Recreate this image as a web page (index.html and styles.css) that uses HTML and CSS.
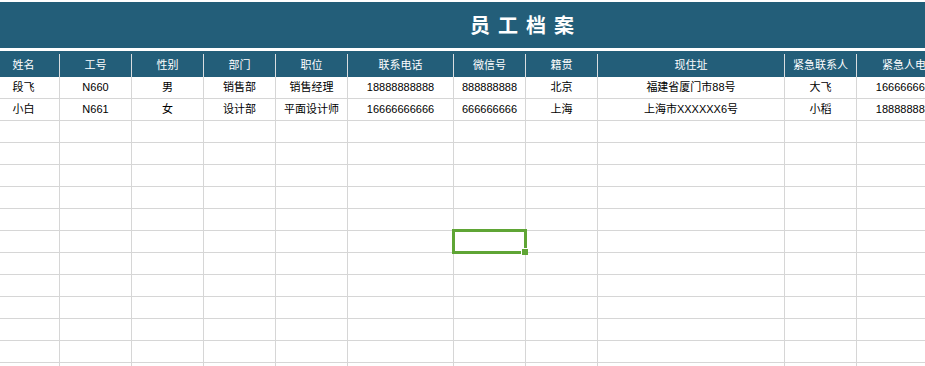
FILE: index.html
```html
<!DOCTYPE html>
<html lang="zh">
<head>
<meta charset="utf-8">
<title>员工档案</title>
<link rel="stylesheet" href="styles.css">
</head>
<body>
<div class="sheet">
  <div class="title-band"><span class="title">员工档案</span></div>
  <div class="grid">
    <div class="row head">
      <div class="cell">姓名</div><div class="cell">工号</div><div class="cell">性别</div><div class="cell">部门</div><div class="cell">职位</div><div class="cell">联系电话</div><div class="cell">微信号</div><div class="cell">籍贯</div><div class="cell">现住址</div><div class="cell">紧急联系人</div><div class="cell">紧急人电话</div>
    </div>
    <div class="row">
      <div class="cell">段飞</div><div class="cell">N660</div><div class="cell">男</div><div class="cell">销售部</div><div class="cell">销售经理</div><div class="cell">18888888888</div><div class="cell">888888888</div><div class="cell">北京</div><div class="cell">福建省厦门市88号</div><div class="cell">大飞</div><div class="cell">16666666666</div>
    </div>
    <div class="row">
      <div class="cell">小白</div><div class="cell">N661</div><div class="cell">女</div><div class="cell">设计部</div><div class="cell">平面设计师</div><div class="cell">16666666666</div><div class="cell">666666666</div><div class="cell">上海</div><div class="cell">上海市XXXXXX6号</div><div class="cell">小稻</div><div class="cell">18888888888</div>
    </div>
    <div class="row"><div class="cell"></div><div class="cell"></div><div class="cell"></div><div class="cell"></div><div class="cell"></div><div class="cell"></div><div class="cell"></div><div class="cell"></div><div class="cell"></div><div class="cell"></div><div class="cell"></div></div>
    <div class="row"><div class="cell"></div><div class="cell"></div><div class="cell"></div><div class="cell"></div><div class="cell"></div><div class="cell"></div><div class="cell"></div><div class="cell"></div><div class="cell"></div><div class="cell"></div><div class="cell"></div></div>
    <div class="row"><div class="cell"></div><div class="cell"></div><div class="cell"></div><div class="cell"></div><div class="cell"></div><div class="cell"></div><div class="cell"></div><div class="cell"></div><div class="cell"></div><div class="cell"></div><div class="cell"></div></div>
    <div class="row"><div class="cell"></div><div class="cell"></div><div class="cell"></div><div class="cell"></div><div class="cell"></div><div class="cell"></div><div class="cell"></div><div class="cell"></div><div class="cell"></div><div class="cell"></div><div class="cell"></div></div>
    <div class="row"><div class="cell"></div><div class="cell"></div><div class="cell"></div><div class="cell"></div><div class="cell"></div><div class="cell"></div><div class="cell"></div><div class="cell"></div><div class="cell"></div><div class="cell"></div><div class="cell"></div></div>
    <div class="row"><div class="cell"></div><div class="cell"></div><div class="cell"></div><div class="cell"></div><div class="cell"></div><div class="cell"></div><div class="cell selected"><span class="sel-box"></span><span class="sel-handle"></span></div><div class="cell"></div><div class="cell"></div><div class="cell"></div><div class="cell"></div></div>
    <div class="row"><div class="cell"></div><div class="cell"></div><div class="cell"></div><div class="cell"></div><div class="cell"></div><div class="cell"></div><div class="cell"></div><div class="cell"></div><div class="cell"></div><div class="cell"></div><div class="cell"></div></div>
    <div class="row"><div class="cell"></div><div class="cell"></div><div class="cell"></div><div class="cell"></div><div class="cell"></div><div class="cell"></div><div class="cell"></div><div class="cell"></div><div class="cell"></div><div class="cell"></div><div class="cell"></div></div>
    <div class="row"><div class="cell"></div><div class="cell"></div><div class="cell"></div><div class="cell"></div><div class="cell"></div><div class="cell"></div><div class="cell"></div><div class="cell"></div><div class="cell"></div><div class="cell"></div><div class="cell"></div></div>
    <div class="row"><div class="cell"></div><div class="cell"></div><div class="cell"></div><div class="cell"></div><div class="cell"></div><div class="cell"></div><div class="cell"></div><div class="cell"></div><div class="cell"></div><div class="cell"></div><div class="cell"></div></div>
    <div class="row"><div class="cell"></div><div class="cell"></div><div class="cell"></div><div class="cell"></div><div class="cell"></div><div class="cell"></div><div class="cell"></div><div class="cell"></div><div class="cell"></div><div class="cell"></div><div class="cell"></div></div>
    <div class="row"><div class="cell"></div><div class="cell"></div><div class="cell"></div><div class="cell"></div><div class="cell"></div><div class="cell"></div><div class="cell"></div><div class="cell"></div><div class="cell"></div><div class="cell"></div><div class="cell"></div></div>
  </div>
</div>
</body>
</html>
```

FILE: styles.css
```css
html, body {
  margin: 0;
  padding: 0;
  background: #ffffff;
}

.sheet {
  width: 925px;
  height: 366px;
  overflow: hidden;
  padding-top: 2px;
  box-sizing: border-box;
  font-family: "Liberation Sans", "Noto Sans CJK SC", sans-serif;
  font-size: 11px;
  color: #000;
}

.title-band {
  height: 46px;
  background: #235e79;
  display: flex;
  align-items: center;
  padding-left: 470px;
  box-sizing: border-box;
}

.title {
  color: #ffffff;
  font-family: "Noto Sans CJK SC", sans-serif;
  font-size: 20px;
  font-weight: 700;
  letter-spacing: 8px;
  line-height: 1;
}

.grid {
  margin-top: 3px;
  margin-left: -12px;
  width: 975px;
}

.row {
  display: grid;
  grid-template-columns: 72px 72px 72px 72px 72px 106px 72px 72px 187px 72px 106px;
  height: 22px;
}

.cell {
  box-sizing: border-box;
  border-right: 1px solid #d6d6d6;
  border-bottom: 1px solid #d6d6d6;
  display: flex;
  align-items: center;
  justify-content: center;
  white-space: nowrap;
  overflow: hidden;
  line-height: 1;
}

.row.head {
  height: 26px;
  background: #235e79;
  padding-top: 3px;
  box-sizing: border-box;
}

.row.head .cell {
  color: #ffffff;
  border-bottom: none;
  border-right-color: #d9dde0;
  padding-bottom: 1px;
}

.cell.selected {
  position: relative;
  overflow: visible;
}

.sel-box {
  position: absolute;
  left: -2px;
  top: -2px;
  width: 75px;
  height: 25px;
  box-sizing: border-box;
  border: 3px solid #5fa535;
  z-index: 2;
}

.sel-handle {
  position: absolute;
  left: 67px;
  top: 17px;
  width: 7px;
  height: 7px;
  box-sizing: border-box;
  background: #5fa535;
  border-left: 1px solid #ffffff;
  border-top: 1px solid #ffffff;
  z-index: 3;
}
```
